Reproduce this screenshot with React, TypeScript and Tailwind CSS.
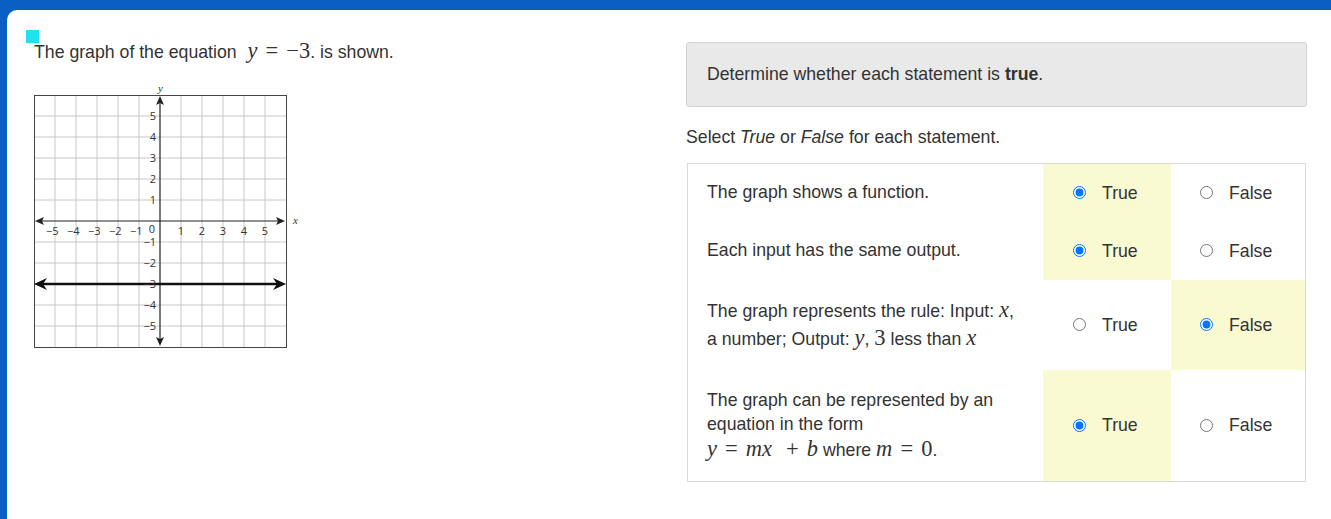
import type {ReactNode} from 'react';

const V = ({children}: {children: ReactNode}) => (
	<span className="font-['Liberation_Serif',serif] italic text-[1.27em] leading-none">{children}</span>
);
const N = ({children}: {children: ReactNode}) => (
	<span className="font-['Liberation_Serif',serif] text-[1.27em] leading-none">{children}</span>
);
const Op = ({children}: {children: ReactNode}) => (
	<span className="font-['Liberation_Serif',serif] text-[1.27em] leading-none mx-[0.36em]">{children}</span>
);

const Graph = () => {
	const ox = 127;
	const oy = 138;
	const u = 21;
	const ks = [-5, -4, -3, -2, -1, 1, 2, 3, 4, 5];
	return (
		<svg width="270" height="268" className="block">
			<rect x="1" y="12" width="252" height="252" fill="#fff" />
			{ks.map((k) => (
				<line key={'v' + k} x1={ox + u * k} y1="12" x2={ox + u * k} y2="264" stroke="#c8c8c8" strokeWidth="1" />
			))}
			{ks.map((k) => (
				<line key={'h' + k} x1="1" y1={oy + u * k} x2="253" y2={oy + u * k} stroke="#c8c8c8" strokeWidth="1" />
			))}
			<rect x="1.5" y="12.5" width="252" height="252" fill="none" stroke="#444" strokeWidth="1" />
			{/* x axis */}
			<line x1="4" y1={oy} x2="250" y2={oy} stroke="#222" strokeWidth="1.2" />
			<path d={`M2 ${oy} L11 ${oy - 4} L9 ${oy} L11 ${oy + 4} Z`} fill="#222" />
			<path d={`M252 ${oy} L243 ${oy - 4} L245 ${oy} L243 ${oy + 4} Z`} fill="#222" />
			{/* y axis */}
			<line x1={ox} y1="15" x2={ox} y2="261" stroke="#222" strokeWidth="1.2" />
			<path d={`M${ox} 13 L${ox - 4} 22 L${ox} 20 L${ox + 4} 22 Z`} fill="#222" />
			<path d={`M${ox} 263 L${ox - 4} 254 L${ox} 256 L${ox + 4} 254 Z`} fill="#222" />
			{/* y = -3 */}
			<line x1="6" y1={oy + 3 * u} x2="248" y2={oy + 3 * u} stroke="#111" strokeWidth="2.4" />
			<path d={`M1 ${oy + 3 * u} L14 ${oy + 3 * u - 6} L10 ${oy + 3 * u} L14 ${oy + 3 * u + 6} Z`} fill="#111" />
			<path d={`M253 ${oy + 3 * u} L240 ${oy + 3 * u - 6} L244 ${oy + 3 * u} L240 ${oy + 3 * u + 6} Z`} fill="#111" />
			<g fontFamily="'Open Sans', sans-serif" fontSize="11" fill="#333">
				{ks.map((k) =>
					k < 0 ? (
						<text key={'xl' + k} x={ox + u * k + 3.5} y={oy + 14} textAnchor="end">
							{'\u2212' + -k}
						</text>
					) : (
						<text key={'xl' + k} x={ox + u * k} y={oy + 14} textAnchor="middle">
							{k}
						</text>
					),
				)}
				{ks.map((k) => (
					<text key={'yl' + k} x={ox - 4} y={oy - u * k + 4} textAnchor="end">
						{k < 0 ? '\u2212' + -k : k}
					</text>
				))}
				<text x={ox - 5} y={oy + 12} textAnchor="end">
					0
				</text>
			</g>
			<text x="260" y={oy + 3} fontFamily="'Liberation Serif', serif" fontStyle="italic" fontSize="11" fill="#333">
				x
			</text>
			<text x={ox - 2} y="9" fontFamily="'Liberation Serif', serif" fontStyle="italic" fontSize="11" fill="#333">
				y
			</text>
		</svg>
	);
};

type Row = {text: ReactNode; answer: boolean; h: string};

const rows: Row[] = [
	{text: <div className="leading-6 pb-[2px]">The graph shows a function.</div>, answer: true, h: 'h-[58px]'},
	{text: <div className="leading-6 pb-[2px]">Each input has the same output.</div>, answer: true, h: 'h-[58px]'},
	{
		text: (
			<div className="leading-[28px]">
				<div>
					The graph represents the rule: Input: <V>x</V>,
				</div>
				<div>
					a number; Output: <V>y</V>, <N>3</N> less than <V>x</V>
				</div>
			</div>
		),
		answer: false,
		h: 'h-[90px]',
	},
	{
		text: (
			<div>
				<div className="leading-6">The graph can be represented by an</div>
				<div className="leading-6">equation in the form</div>
				<div className="leading-[28px]">
					<V>y</V>
					<Op>=</Op>
					<V>mx</V>
					<span className="inline-block w-[6px]" />
					<Op>+</Op>
					<V>b</V> where <V>m</V>
					<Op>=</Op>
					<N>0</N>.
				</div>
			</div>
		),
		answer: true,
		h: 'h-[111px]',
	},
];

const Radio = ({checked, label}: {checked: boolean; label: string}) => (
	<label className="flex items-center gap-[16px]">
		<input type="radio" checked={checked} readOnly className="w-[13px] h-[13px] m-0" />
		<span>{label}</span>
	</label>
);

const App = () => {
	return (
		<div className="h-[519px] overflow-hidden bg-[#0a5fc2] pt-[10px] pl-[7px] font-['Liberation_Sans',Arial,sans-serif] text-[17.7px] text-[#333]">
			<div className="relative h-[600px] bg-white rounded-tl-[10px] flex items-start">
				<div className="absolute left-[19px] top-[20px] w-[13px] h-[13px] bg-[#1fe2ee]" />
				<div className="w-[679px] pl-[27px] pt-[30px]">
					<div className="leading-6">
						The graph of the equation <span className="inline-block w-[6px]" />
						<V>y</V>
						<Op>=</Op>
						<N>{'\u2212'}3</N>. is shown.
					</div>
					<div className="mt-[19px] ml-[-1px]">
						<Graph />
					</div>
				</div>
				<div className="w-[621px] pt-[32px]">
					<div className="h-[65px] flex items-center px-[20px] bg-[#e9e9e9] border border-[#d2d2d2] rounded-[3px]">
						<span>
							Determine whether each statement is <b>true</b>.
						</span>
					</div>
					<div className="mt-[18px] leading-6">
						Select <i>True</i> or <i>False</i> for each statement.
					</div>
					<div className="mt-[14px] ml-[1px] w-[619px] border border-[#dadada]">
						{rows.map((r, i) => (
							<div key={i} className={`flex ${r.h}`}>
								<div className="w-[355px] pl-[19px] flex items-center">{r.text}</div>
								<div className={`w-[128px] pl-[30px] flex items-center ${r.answer ? 'bg-[#fafad2]' : ''}`}>
									<Radio checked={r.answer} label="True" />
								</div>
								<div className={`flex-1 pl-[29px] flex items-center ${!r.answer ? 'bg-[#fafad2]' : ''}`}>
									<Radio checked={!r.answer} label="False" />
								</div>
							</div>
						))}
					</div>
				</div>
			</div>
		</div>
	);
};

export default App;
